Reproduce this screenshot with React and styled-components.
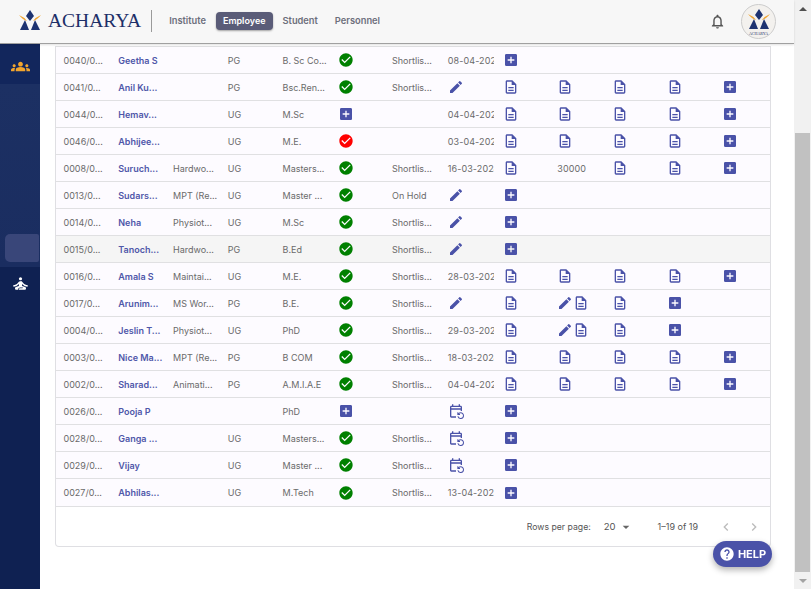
import React from 'react'
import styled, { createGlobalStyle } from 'styled-components'
import {
  MdAddBox, MdCheckCircle, MdEdit, MdOutlineDescription, MdOutlineEventRepeat,
  MdNotificationsNone, MdHelp, MdGroups, MdSelfImprovement, MdArrowDropDown,
  MdChevronLeft, MdChevronRight,
} from 'react-icons/md'

const GlobalStyle = createGlobalStyle`
  html, body { margin: 0; padding: 0; height: 100%; overflow: hidden; background: #fff; }
  body { font-family: Inter, "Noto Sans", sans-serif; }
  * { box-sizing: border-box; }
`

const Logo = ({ size = 24 }) => (
  <svg width={size} height={size} viewBox="0 0 24 24">
    <path d="M12 1 L16 7 L12 12 L8 7 Z" fill="#1d3270" />
    <path d="M7 11 L11 21 L2 21 Z" fill="#1d3270" />
    <path d="M17 11 L22 21 L13 21 Z" fill="#1d3270" />
    <path d="M1 6 Q6 8 9 12 Q5 11 1 6 Z M23 6 Q18 8 15 12 Q19 11 23 6 Z" fill="#f0a32e" />
  </svg>
)

const doc = { t: 'doc' }
const add = { t: 'add' }
const edit = { t: 'edit' }
const cal = { t: 'cal' }
const both = { t: 'both' }
const four = [doc, doc, doc, doc, add]

const rows = [
  ['0040/0...', 'Geetha S', '', 'PG', 'B. Sc Co...', 'ok', 'Shortlis...', '08-04-2024', [add]],
  ['0041/0...', 'Anil Ku...', '', 'PG', 'Bsc.Ren...', 'ok', 'Shortlis...', edit, four],
  ['0044/0...', 'Hemav...', '', 'UG', 'M.Sc', 'add', '', '04-04-2024', four],
  ['0046/0...', 'Abhijee...', '', 'UG', 'M.E.', 'bad', '', '03-04-2024', four],
  ['0008/0...', 'Suruch...', 'Hardwo...', 'UG', 'Masters...', 'ok', 'Shortlis...', '16-03-2024', [doc, '30000', doc, doc, add]],
  ['0013/0...', 'Sudars...', 'MPT (Re...', 'UG', 'Master ...', 'ok', 'On Hold', edit, [add]],
  ['0014/0...', 'Neha', 'Physiot...', 'UG', 'M.Sc', 'ok', 'Shortlis...', edit, [add]],
  ['0015/0...', 'Tanoch...', 'Hardwo...', 'PG', 'B.Ed', 'ok', 'Shortlis...', edit, [add]],
  ['0016/0...', 'Amala S', 'Maintai...', 'UG', 'M.E.', 'ok', 'Shortlis...', '28-03-2024', four],
  ['0017/0...', 'Arunim...', 'MS Wor...', 'PG', 'B.E.', 'ok', 'Shortlis...', edit, [doc, both, doc, add]],
  ['0004/0...', 'Jeslin T...', 'Physiot...', 'UG', 'PhD', 'ok', 'Shortlis...', '29-03-2024', [doc, both, doc, add]],
  ['0003/0...', 'Nice Ma...', 'MPT (Re...', 'PG', 'B COM', 'ok', 'Shortlis...', '18-03-2024', four],
  ['0002/0...', 'Sharad...', 'Animati...', 'PG', 'A.M.I.A.E', 'ok', 'Shortlis...', '04-04-2024', four],
  ['0026/0...', 'Pooja P', '', '', 'PhD', 'add', '', cal, [add]],
  ['0028/0...', 'Ganga ...', '', 'UG', 'Masters...', 'ok', 'Shortlis...', cal, [add]],
  ['0029/0...', 'Vijay', '', 'UG', 'Master ...', 'ok', 'Shortlis...', cal, [add]],
  ['0027/0...', 'Abhilas...', '', 'UG', 'M.Tech', 'ok', 'Shortlis...', '13-04-2024', [add]],
]

const Action = ({ item }) => {
  if (typeof item === 'string') return <DateText>{item}</DateText>
  if (item.t === 'add') return <MdAddBox size={16} />
  if (item.t === 'edit') return <MdEdit size={16} />
  if (item.t === 'cal') return <MdOutlineEventRepeat size={16} />
  if (item.t === 'both') return <Pair><MdEdit size={16} /><MdOutlineDescription size={16} /></Pair>
  return <MdOutlineDescription size={16} />
}

const App = () => (
  <Page>
    <GlobalStyle />
    <Main>
      <Header>
        <Brand>
          <Logo size={24} />
          <BrandName>ACHARYA</BrandName>
        </Brand>
        <Nav>
          <NavItem>Institute</NavItem>
          <NavItem $active>Employee</NavItem>
          <NavItem>Student</NavItem>
          <NavItem>Personnel</NavItem>
        </Nav>
        <HeaderRight>
          <MdNotificationsNone size={17} color="#555" />
          <Avatar>
            <Logo size={24} />
            <AvatarText>ACHARYA</AvatarText>
          </Avatar>
        </HeaderRight>
      </Header>
      <Body>
        <Sidebar>
          <SideTop><MdGroups size={19} color="#f2a52d" /></SideTop>
          <SideMiddle><SidePill /></SideMiddle>
          <SideBottom><MdSelfImprovement size={19} color="#fff" /></SideBottom>
        </Sidebar>
        <Content>
          <Card>
            {rows.map((r) => (
              <Row key={r[0]} $hover={r[0] === '0015/0...'}>
                <Cell>{r[0]}</Cell>
                <Cell><Name>{r[1]}</Name></Cell>
                <Cell>{r[2]}</Cell>
                <Cell>{r[3]}</Cell>
                <Cell>{r[4]}</Cell>
                <IconCell>
                  {r[5] === 'ok' && <MdCheckCircle size={16} color="#008000" />}
                  {r[5] === 'bad' && <MdCheckCircle size={16} color="#f00" />}
                  {r[5] === 'add' && <MdAddBox size={16} />}
                </IconCell>
                <Cell>{r[6]}</Cell>
                <IconCell><Action item={r[7]} /></IconCell>
                {r[8].map((a, i) => <IconCell key={i}><Action item={a} /></IconCell>)}
              </Row>
            ))}
            <Pagination>
              <RowsLabel>Rows per page:</RowsLabel>
              <PageSize>20<MdArrowDropDown size={16} color="#666" /></PageSize>
              <PageRange>1–19 of 19</PageRange>
              <PageArrows>
                <MdChevronLeft size={16} />
                <MdChevronRight size={16} />
              </PageArrows>
            </Pagination>
          </Card>
        </Content>
      </Body>
    </Main>
    <Scrollbar>
      <Arrow $up />
      <Track><Thumb /></Track>
      <Arrow />
    </Scrollbar>
    <HelpButton><MdHelp size={16} />HELP</HelpButton>
  </Page>
)

const Page = styled.div`
  display: flex;
  width: 811px;
  height: 589px;
  overflow: hidden;
`

const Main = styled.div`
  flex: 1;
  min-width: 0;
  display: flex;
  flex-direction: column;
`

const Header = styled.header`
  height: 44px;
  flex: none;
  display: flex;
  align-items: center;
  padding: 0 18px 1px 18px;
  background: #f7f7f7;
  border-bottom: 1px solid #a0a0a0;
  box-shadow: 0 1px 2px rgba(0, 0, 0, 0.12);
  position: relative;
  z-index: 2;
`

const Brand = styled.div`
  display: flex;
  align-items: center;
  gap: 6px;
  height: 22px;
  padding-right: 10px;
  border-right: 1px solid #9a9a9a;
`

const BrandName = styled.span`
  font-family: "Liberation Serif", serif;
  font-size: 19.5px;
  color: #1d2f68;
`

const Nav = styled.nav`
  display: flex;
  align-items: center;
  gap: 10px;
  margin-left: 17px;
  & > :last-child { margin-left: 7px; }
`

const NavItem = styled.div`
  font-size: ${(p) => (p.$active ? '9px' : '9.3px')};
  font-weight: 600;
  color: ${(p) => (p.$active ? '#fff' : '#6d6f7c')};
  background: ${(p) => (p.$active ? '#5a5c78' : 'transparent')};
  padding: ${(p) => (p.$active ? '0 7px' : '0')};
  height: 18px;
  line-height: 18px;
  border-radius: 4px;
  box-shadow: ${(p) => (p.$active ? '0 1px 2px rgba(0,0,0,.35)' : 'none')};
`

const HeaderRight = styled.div`
  margin-left: auto;
  display: flex;
  align-items: center;
  gap: 15px;
`

const Avatar = styled.div`
  width: 35px;
  height: 35px;
  border-radius: 50%;
  border: 1px solid #ccc;
  background: #f3f1ee;
  display: flex;
  flex-direction: column;
  align-items: center;
  justify-content: center;
`

const AvatarText = styled.span`
  font-family: "Liberation Serif", serif;
  font-size: 4px;
  line-height: 3px;
  color: #1d2f68;
`

const Body = styled.div`
  flex: 1;
  min-height: 0;
  display: flex;
`

const Sidebar = styled.aside`
  width: 40px;
  flex: none;
  display: flex;
  flex-direction: column;
  background: #12235a;
`

const SideTop = styled.div`
  height: 40px;
  display: flex;
  justify-content: center;
  padding-top: 13px;
  background: #12265c;
`

const SideMiddle = styled.div`
  height: 183px;
  padding: 150px 1px 0 5px;
  background: linear-gradient(#1c3063, #1a2d60);
`

const SidePill = styled.div`
  height: 28px;
  background: #394679;
  border-radius: 5px 2px 2px 5px;
`

const SideBottom = styled.div`
  flex: 1;
  display: flex;
  justify-content: center;
  padding-top: 7px;
  background: #0f2152;
`

const Content = styled.main`
  flex: 1;
  min-width: 0;
  padding: 2px 23px 0 15px;
  background: #fff;
`

const Card = styled.div`
  border: 1px solid #dfdfe3;
  border-top: none;
  border-radius: 0 0 4px 4px;
`

const Row = styled.div`
  display: grid;
  grid-template-columns: repeat(13, 54.75px);
  height: 27px;
  align-items: center;
  background: ${(p) => (p.$hover ? '#f5f5f5' : '#fdfbff')};
  border-bottom: 1px solid #e0e0e2;
  &:first-child { border-top: 1px solid #e0e0e2; height: 28px; }
  &:nth-child(17) { height: 28px; }
`

const Cell = styled.div`
  padding: 0 0 0 7.5px;
  font-size: 9px;
  color: #6a6a6a;
  white-space: nowrap;
`

const Name = styled.span`
  font-weight: 600;
  color: #4f57a9;
`

const IconCell = styled.div`
  padding-left: 8.5px;
  display: flex;
  align-items: center;
  min-width: 0;
  overflow: hidden;
  color: #4a52a8;
  font-size: 9px;
`

const DateText = styled.span`
  color: #6a6a6a;
  white-space: nowrap;
  letter-spacing: 0.1px;
`

const Pair = styled.span`
  display: flex;
`

const Pagination = styled.div`
  height: 39px;
  display: flex;
  align-items: center;
  justify-content: flex-end;
  padding-right: 8px;
  font-size: 9px;
  color: #555;
`

const RowsLabel = styled.span`
  font-size: 8.7px;
`

const PageSize = styled.div`
  display: flex;
  align-items: center;
  margin-left: 13px;
  gap: 2px;
  font-size: 9.5px;
`

const PageRange = styled.div`
  margin-left: 24px;
`

const PageArrows = styled.div`
  display: flex;
  gap: 12px;
  margin-left: 20px;
  color: #bbb;
`

const Scrollbar = styled.div`
  width: 17px;
  flex: none;
  display: flex;
  flex-direction: column;
  background: #f1f1f1;
`

const Arrow = styled.div`
  height: 17px;
  display: flex;
  align-items: center;
  justify-content: center;
  &::before {
    content: '';
    border-left: 4px solid transparent;
    border-right: 4px solid transparent;
    ${(p) => (p.$up ? 'border-bottom: 4px solid #505050;' : 'border-top: 4px solid #a3a3a3;')}
  }
`

const Track = styled.div`
  flex: 1;
  padding-top: 116px;
`

const Thumb = styled.div`
  height: 439px;
  margin: 0 1px;
  background: #c1c1c1;
`

const HelpButton = styled.div`
  position: fixed;
  left: 713px;
  top: 541px;
  width: 59px;
  height: 26px;
  border-radius: 13px;
  background: #4a52a8;
  color: #fff;
  display: flex;
  align-items: center;
  justify-content: center;
  gap: 3px;
  font-size: 11px;
  font-weight: 700;
  box-shadow: 0 3px 6px rgba(0, 0, 0, 0.3);
`

export default App
